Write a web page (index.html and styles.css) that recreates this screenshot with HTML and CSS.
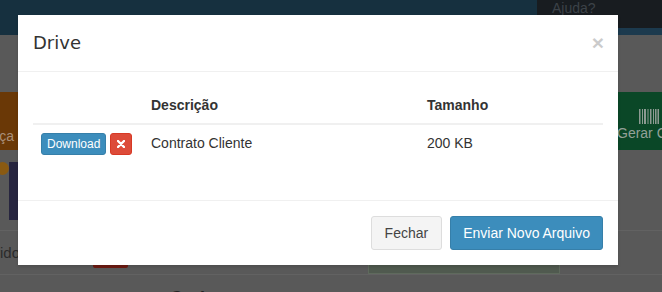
FILE: index.html
```html
<!DOCTYPE html>
<html lang="pt-BR">
<head>
  <meta charset="UTF-8">
  <meta name="viewport" content="width=device-width, initial-scale=1.0">
  <title>Drive</title>
  <link rel="stylesheet" href="styles.css">
</head>
<body>
  <div class="page">
    <div class="topbar">
      <div class="help">Ajuda?</div>
    </div>

    <div class="tiles">
      <div class="tile tile-orange"><span>Cobrança</span></div>
      <div class="tile tile-green">
        <svg class="barcode" width="20" height="15" viewBox="0 0 20 15">
          <g fill="#8c9a92">
            <rect x="0" y="0" width="1.5" height="15"/>
            <rect x="3" y="0" width="1" height="15"/>
            <rect x="5" y="0" width="2" height="15"/>
            <rect x="8.5" y="0" width="1" height="15"/>
            <rect x="11" y="0" width="1.5" height="15"/>
            <rect x="14" y="0" width="1" height="15"/>
            <rect x="16" y="0" width="1.5" height="15"/>
            <rect x="18.5" y="0" width="1.5" height="15"/>
          </g>
        </svg>
        <span>Gerar Carnê</span>
      </div>
    </div>

    <div class="row2">
      <div class="dot"></div>
      <div class="bar-purple"></div>
    </div>

    <div class="band">
      <div class="band-label"><span>Devido</span></div>
      <div class="band-red"></div>
      <div class="band-green"></div>
    </div>

    <div class="below">
      <span class="below-title">Cod</span>
    </div>
  </div>

  <div class="modal">
    <div class="modal-header">
      <h4 class="modal-title">Drive</h4>
      <span class="close">&times;</span>
    </div>
    <div class="modal-body">
      <table class="table">
        <thead>
          <tr>
            <th class="col-actions"></th>
            <th class="col-desc">Descrição</th>
            <th>Tamanho</th>
          </tr>
        </thead>
        <tbody>
          <tr>
            <td>
              <button class="btn btn-xs btn-primary">Download</button>
              <button class="btn btn-xs btn-danger">
                <svg width="8" height="8" viewBox="0 0 8 8"><path d="M1 1 L7 7 M7 1 L1 7" stroke="#fff" stroke-width="2.4" stroke-linecap="round"/></svg>
              </button>
            </td>
            <td>Contrato Cliente</td>
            <td>200 KB</td>
          </tr>
        </tbody>
      </table>
    </div>
    <div class="modal-footer">
      <button class="btn btn-default">Fechar</button>
      <button class="btn btn-primary">Enviar Novo Arquivo</button>
    </div>
  </div>
</body>
</html>
```

FILE: styles.css
```css
body {
  margin: 0;
  background: #595959;
  font-family: "Liberation Sans", Arial, sans-serif;
  font-size: 14px;
  color: #333;
  overflow: hidden;
}

/* dimmed page behind the modal */
.page {
  height: 292px;
  overflow: hidden;
}
.topbar {
  height: 35px;
  background: #16303f;
  display: flex;
  justify-content: flex-end;
}
.help {
  width: 110px;
  height: 28px;
  padding-left: 15px;
  background: #181c20;
  border-bottom: 7px solid #1c3a4e;
  color: #3c4248;
  font-size: 14px;
  line-height: 16px;
}
.tiles {
  margin-top: 57px;
  height: 58px;
  display: flex;
  justify-content: space-between;
}
.tile {
  overflow: hidden;
  white-space: nowrap;
}
.tile-orange {
  width: 18px;
  background: #6a3806;
  color: #a98f78;
  display: flex;
  justify-content: flex-end;
  padding-top: 36px;
  box-sizing: border-box;
}
.tile-orange span { padding-right: 4px; }
.tile-green {
  width: 47px;
  background: #0a4727;
  color: #93a198;
  display: flex;
  flex-direction: column;
  align-items: flex-start;
  padding-top: 17px;
  padding-left: 2px;
  box-sizing: border-box;
}
.tile-green .barcode { margin-left: 22px; }
.tile-green span { margin-top: 1px; }
.row2 {
  height: 80px;
  display: flex;
  align-items: flex-start;
  padding-top: 12px;
  box-sizing: border-box;
}
.dot {
  width: 13px;
  height: 13px;
  margin-left: -4px;
  border-radius: 50%;
  background: #8a5a12;
}
.bar-purple {
  width: 9px;
  height: 58px;
  background: #27253f;
}
.band {
  height: 43px;
  border-top: 1px solid #626262;
  border-bottom: 1px solid #626262;
  display: flex;
  align-items: flex-start;
}
.band-label {
  width: 20px;
  overflow: hidden;
  white-space: nowrap;
  display: flex;
  justify-content: flex-end;
  margin-top: 13px;
  color: #2b2b2b;
  font-size: 15px;
}
.band-red {
  width: 35px;
  height: 17px;
  margin: 20px 0 0 73px;
  background: #6e1b12;
  border-radius: 2px;
}
.band-green {
  width: 190px;
  height: 30px;
  margin: 11px 0 0 240px;
  background: #505a4f;
  border: 1px solid #5f6a5d;
}
.below {
  padding: 13px 0 0 170px;
}
.below-title {
  font-weight: bold;
  font-size: 18px;
  color: #222;
}

/* modal */
.modal {
  position: absolute;
  top: 15px;
  left: 18px;
  width: 600px;
  background: #fff;
  box-shadow: 0 2px 3px rgba(0, 0, 0, 0.125);
}
.modal-header {
  padding: 15px;
  border-bottom: 1px solid #f0f0f0;
  display: flex;
  justify-content: space-between;
  align-items: flex-start;
}
.modal-title {
  margin: 0;
  font-family: "DejaVu Sans", sans-serif;
  font-weight: normal;
  font-size: 18px;
  line-height: 26px;
  color: #333;
}
.close {
  font-size: 21px;
  font-weight: bold;
  line-height: 1;
  color: #000;
  opacity: 0.2;
  margin-top: 2px;
  margin-right: -1px;
}
.modal-body { padding: 15px; }
.table {
  width: 100%;
  border-collapse: collapse;
  margin-bottom: 20px;
}
.table th, .table td {
  padding: 8px;
  line-height: 20px;
  text-align: left;
  vertical-align: top;
}
.table td { padding-bottom: 10px; }
.table th { border-bottom: 2px solid #f0f0f0; }
.col-actions { width: 94px; }
.col-desc { width: 260px; }

.btn {
  display: inline-block;
  font-family: "Liberation Sans", Arial, sans-serif;
  font-size: 14px;
  line-height: 20px;
  padding: 6px 12px;
  border: 1px solid transparent;
  border-radius: 3px;
  vertical-align: middle;
}
.btn-xs {
  font-size: 12px;
  line-height: 18px;
  padding: 1px 5px;
}
.btn-primary {
  background: #3c8dbc;
  border-color: #367fa9;
  color: #fff;
}
.btn-danger {
  background: #dd4b39;
  border-color: #d73925;
  color: #fff;
  width: 22px;
  height: 22px;
  padding: 0;
  display: inline-flex;
  align-items: center;
  justify-content: center;
}
.btn-default {
  background: #f4f4f4;
  border-color: #ddd;
  color: #444;
  padding: 6px 13px;
}
.modal-footer {
  padding: 15px;
  border-top: 1px solid #f0f0f0;
  display: flex;
  justify-content: flex-end;
  gap: 8px;
}
```
